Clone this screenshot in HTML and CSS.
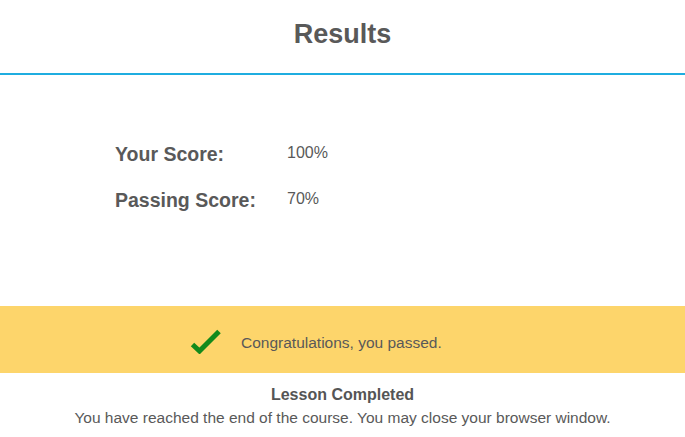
FILE: index.html
```html
<!DOCTYPE html>
<html lang="en">
<head>
<meta charset="utf-8">
<title>Results</title>
<link rel="stylesheet" href="styles.css">
</head>
<body>
<header class="header">
  <h1 class="title">Results</h1>
</header>
<section class="scores">
  <div class="row">
    <span class="label">Your Score:</span>
    <span class="value">100%</span>
  </div>
  <div class="row">
    <span class="label">Passing Score:</span>
    <span class="value">70%</span>
  </div>
</section>
<section class="banner">
  <svg class="check" width="31" height="25" viewBox="0 0 31 25" aria-hidden="true">
    <polyline points="2.5,15.5 9.5,22 29,2.5" fill="none" stroke="#138a1b" stroke-width="5" stroke-linecap="butt" stroke-linejoin="miter"/>
  </svg>
  <span class="banner-text">Congratulations, you passed.</span>
</section>
<footer class="footer">
  <div class="footer-title">Lesson Completed</div>
  <div class="footer-text">You have reached the end of the course. You may close your browser window.</div>
</footer>
</body>
</html>
```
FILE: styles.css
```css
html, body {
  margin: 0;
  padding: 0;
  background: #ffffff;
}
body {
  font-family: "Liberation Sans", Arial, sans-serif;
  color: #595959;
}
.header {
  height: 73px;
  border-bottom: 2px solid #1fade0;
  display: flex;
  justify-content: center;
  align-items: flex-start;
}
.title {
  margin: 0;
  padding-top: 18px;
  font-size: 27px;
  line-height: 32px;
  font-weight: bold;
  color: #595959;
}
.scores {
  padding: 67px 0 94px 115px;
  display: flex;
  flex-direction: column;
  gap: 22px;
}
.row {
  display: grid;
  grid-template-columns: 172px auto;
  align-items: start;
}
.label {
  font-size: 19.5px;
  line-height: 24px;
  font-weight: bold;
  color: #595959;
}
.value {
  font-size: 16px;
  line-height: 20px;
  padding-top: 1px;
  color: #595959;
}
.banner {
  height: 67px;
  background: #fdd56b;
  display: flex;
  align-items: center;
  padding-left: 190px;
}
.check {
  display: block;
  margin-right: 20px;
  margin-top: 4px;
}
.banner-text {
  font-size: 15.5px;
  line-height: 20px;
  margin-top: 7px;
  color: #595959;
}
.footer {
  padding-top: 10px;
  text-align: center;
  line-height: 23px;
}
.footer-title {
  font-size: 16px;
  font-weight: bold;
  color: #555555;
}
.footer-text {
  font-size: 15.5px;
  color: #595959;
}
```
